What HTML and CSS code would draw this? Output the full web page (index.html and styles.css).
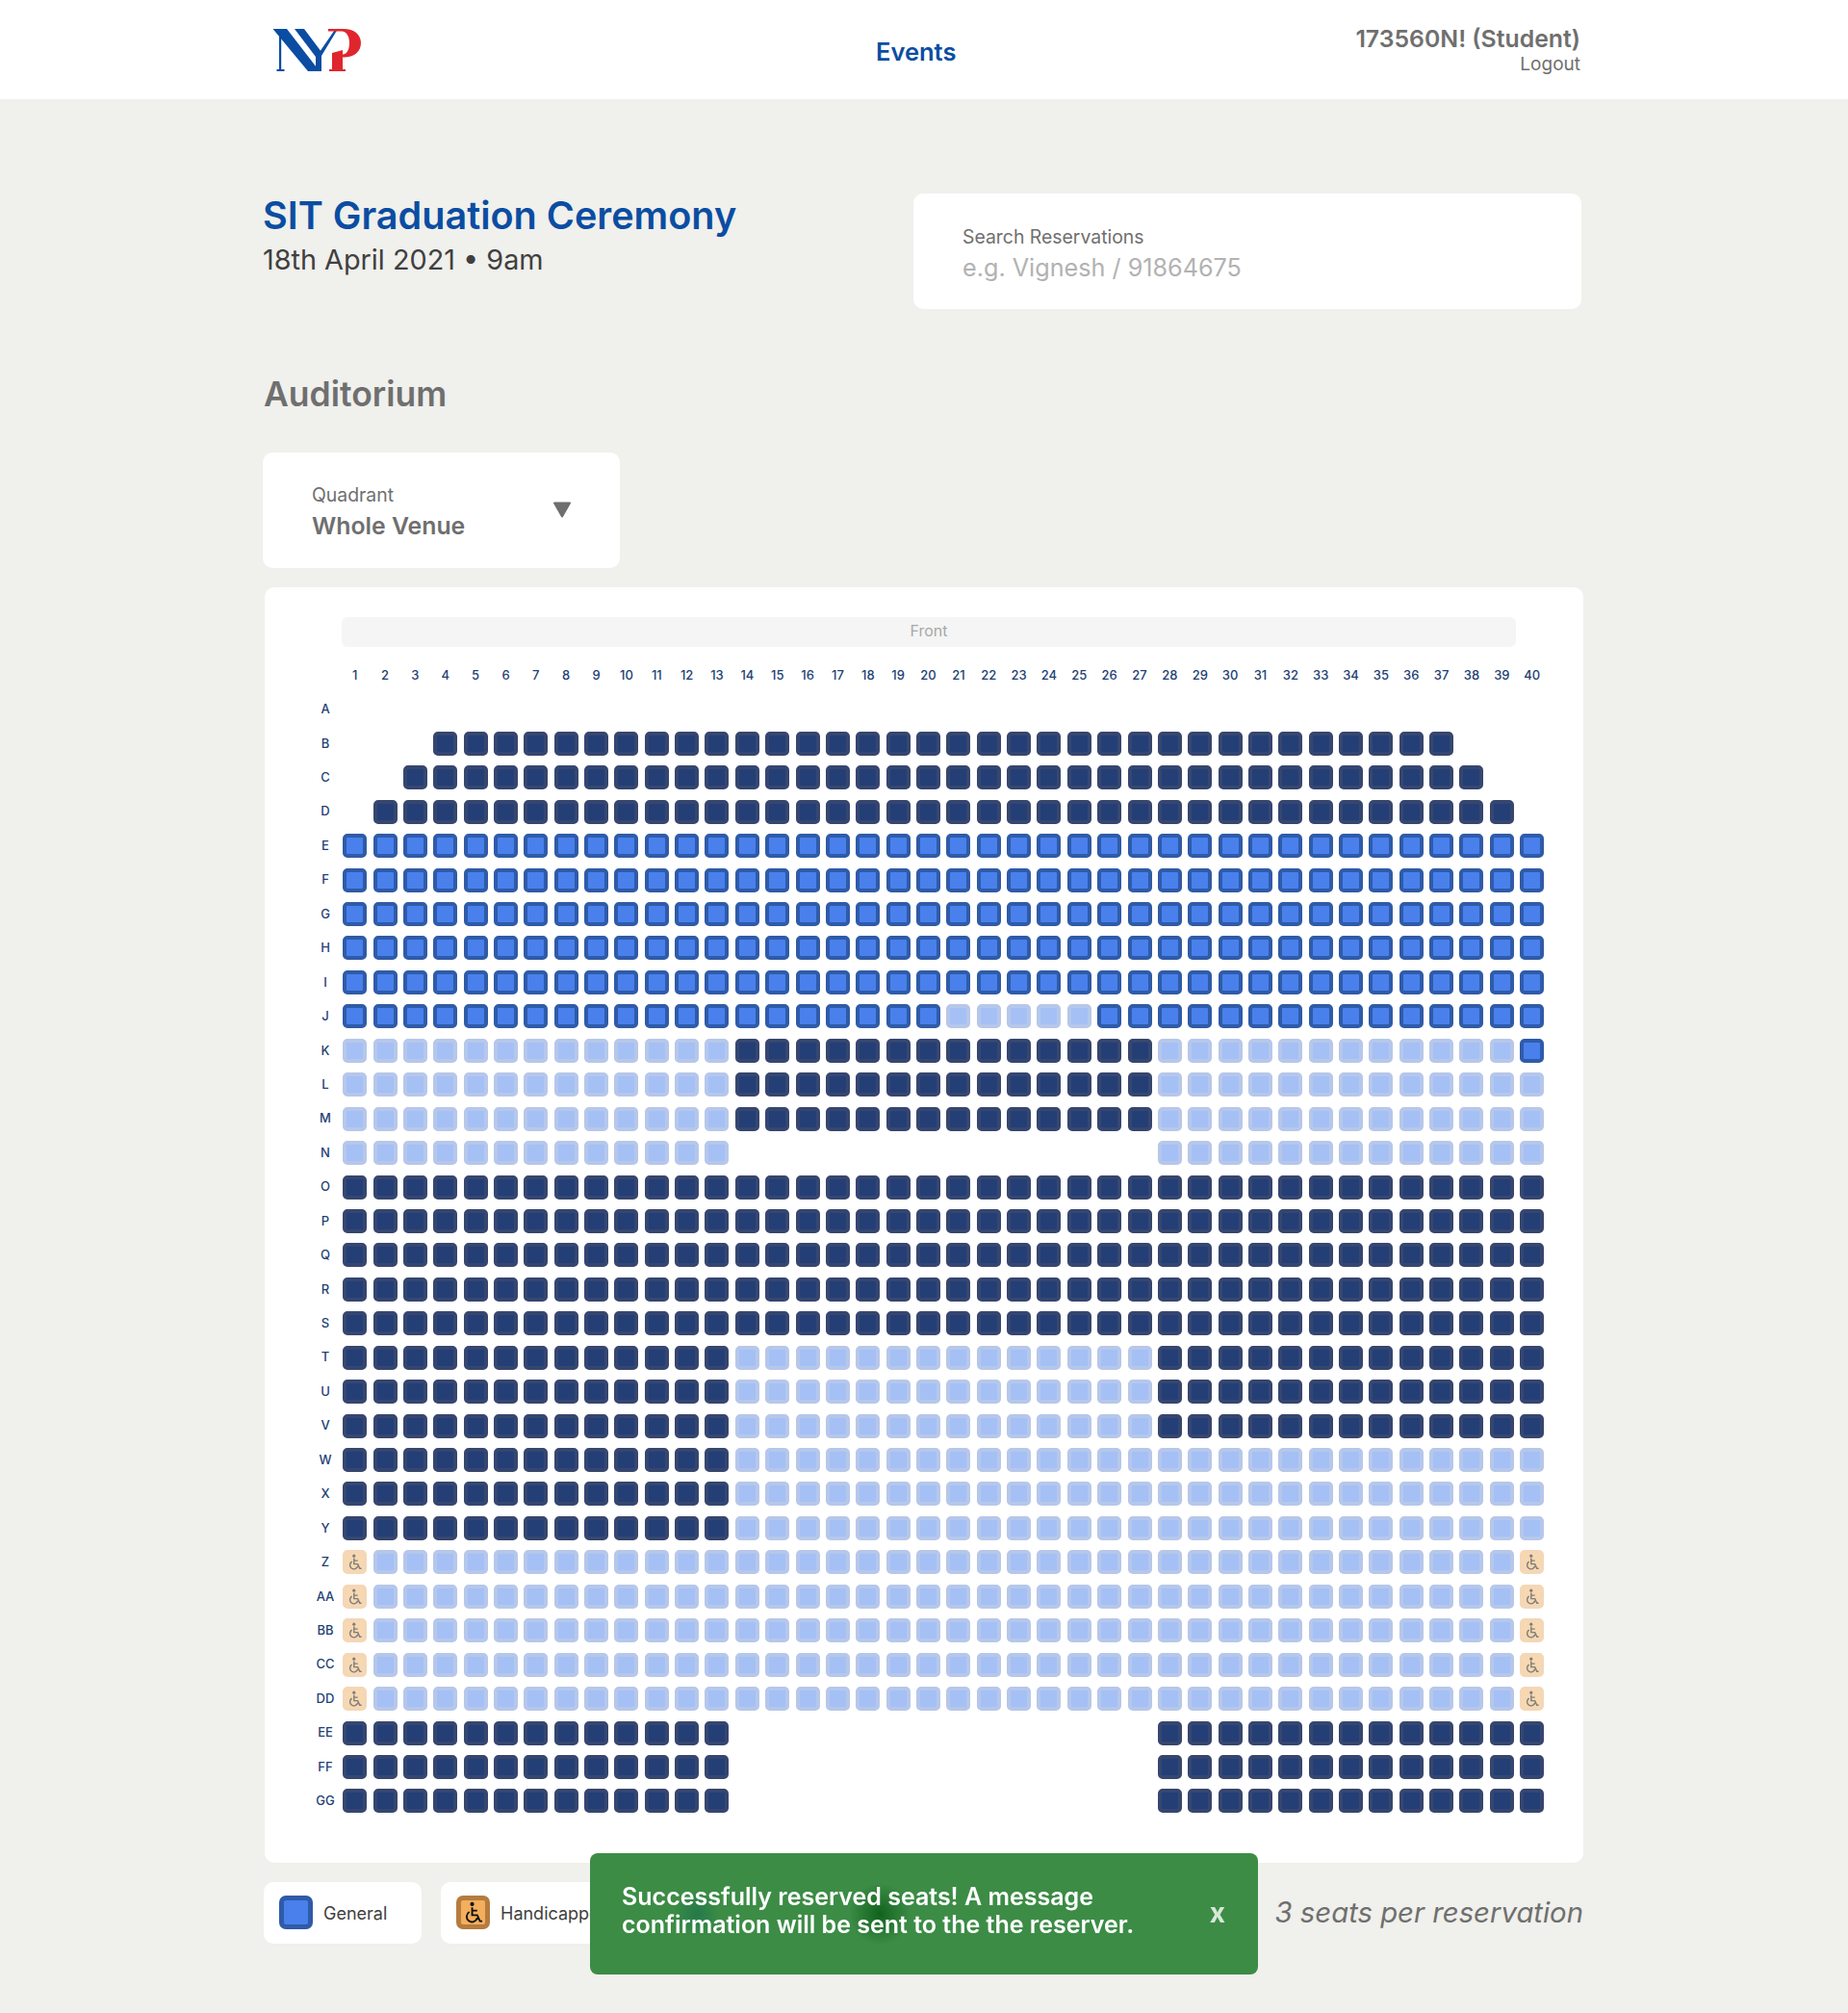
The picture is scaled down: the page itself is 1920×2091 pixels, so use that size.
FILE: index.html
```html
<!DOCTYPE html>
<html lang="en">
<head>
    <meta charset="UTF-8">
    <meta name="viewport" content="width=device-width, initial-scale=1.0">
    <title>Auditorium Seats</title>
    <link rel="stylesheet" href="styles.css">
</head>
<body>

    <header class="topbar">
        <div class="topbar-inner">
            <svg class="logo" viewBox="0 0 104 54" role="img" aria-label="NYP">
                <g fill="#0b4da2">
                    <rect x="12" y="5" width="2.2" height="42"/>
                    <rect x="9.5" y="47" width="8" height="2"/>
                    <polygon points="5.5,5 20,5 54,49 42,49"/>
                    <polygon points="28,5 38,5 56,29 56,49 50,49 50,34"/>
                    <polygon points="54,29 70.5,5 73,5 56,33"/>
                </g>
                <g fill="#e0262d">
                    <polygon points="67,30 78,27 78,47 67,47"/>
                    <rect x="64" y="47" width="17" height="2"/>
                    <path d="M63 5h16c11 0 18 6 18 14.500c0 9-7 15-18 15h-1v-3c5 0 7-6 7-12c0-7-3-12-8-12h-14z"/>
                </g>
            </svg>
            <a class="nav-link" href="#">Events</a>
            <div class="user">
                <div class="user-name">173560N! (Student)</div>
                <a class="user-logout" href="#">Logout</a>
            </div>
        </div>
    </header>

    <main class="page">
        <div class="event-row">
            <div class="event-info">
                <h1>SIT Graduation Ceremony</h1>
                <p>18th April 2021 • 9am</p>
            </div>
            <div class="card search-card">
                <label class="field-label" for="search">Search Reservations</label>
                <input id="search" class="search-input" type="text" placeholder="e.g. Vignesh / 91864675">
            </div>
        </div>

        <h2>Auditorium</h2>

        <div class="card quadrant-card">
            <div>
                <div class="field-label">Quadrant</div>
                <div class="quadrant-value">Whole Venue</div>
            </div>
            <svg class="caret" viewBox="0 0 20 17"><path d="M2 1.500h16l-8 14z" fill="#6f6f6f" stroke="#6f6f6f" stroke-width="2" stroke-linejoin="round"/></svg>
        </div>

        <section class="card seat-panel">
            <div class="front-bar">Front</div>
            <div class="seat-grid" id="seatGrid"></div>
        </section>

        <div class="footer-row">
            <div class="card legend-card">
                <span class="swatch swatch-general"></span>
                General
            </div>
            <div class="card legend-card legend-wide">
                <span class="swatch swatch-handicap">
                    <svg class="wheelchair" viewBox="0 0 24 24"><use href="#wheelchair-icon"/></svg>
                </span>
                Handicapped
            </div>
            <div class="seat-note">3 seats per reservation</div>
        </div>
    </main>

    <div class="toast">
        <div class="toast-text">Successfully reserved seats! A message<br>confirmation will be sent to the the reserver.</div>
        <button class="toast-close">x</button>
    </div>

    <svg class="icon-defs" aria-hidden="true">
        <symbol id="wheelchair-icon" viewBox="0 0 24 24">
            <circle cx="11" cy="3" r="2.200" fill="currentColor"/>
            <path d="M11 6.500v8.500h5.500l3 6.500h2.500M11 10h5.500M8 11.500a5.800 5.800 0 1 0 8.500 6.500" fill="none" stroke="currentColor" stroke-width="2"/>
        </symbol>
    </svg>

    <script src="script.js"></script>
</body>
</html>
```

FILE: styles.css
```css
* {
    box-sizing: border-box;
}

body {
    margin: 0;
    font-family: Inter, "Open Sans", sans-serif;
    background-color: #f0f0ec;
    color: #6f6f6f;
}

a {
    text-decoration: none;
}

.topbar {
    background: white;
    height: 103px;
}

.topbar-inner {
    display: grid;
    grid-template-columns: 637px auto 1fr;
    align-items: center;
    height: 100%;
    padding: 0 278px 0 273px;
}

.logo {
    display: block;
    width: 104px;
    height: 54px;
    margin-left: 5px;
}

.nav-link {
    margin-top: 4px;
    color: #0b4da2;
    font-size: 25.500px;
    font-weight: 600;
}

.user {
    padding-top: 2px;
    text-align: right;
}

.user-name {
    font-size: 24.800px;
    font-weight: 600;
    line-height: 30px;
    margin-top: -1px;
}

.user-logout {
    display: block;
    color: #6f6f6f;
    font-size: 19px;
    line-height: 24px;
}

.page {
    padding: 98px 275px 72px 273px;
}

.card {
    background: white;
    border-radius: 10px;
}

.event-row {
    display: flex;
    justify-content: space-between;
}

h1 {
    margin: 0;
    padding-top: 1px;
    color: #0b4da2;
    font-size: 39.600px;
    font-weight: 600;
    line-height: 45px;
}

.event-info p {
    margin: 0;
    color: #404040;
    font-size: 28.800px;
    line-height: 46px;
}

.search-card {
    width: 694px;
    height: 120px;
    margin-right: 2px;
    padding: 31px 50px 0 51px;
}

.field-label {
    display: block;
    color: #6f6f6f;
    font-size: 19.400px;
    line-height: 28px;
}

.search-input {
    width: 100%;
    padding: 0;
    border: none;
    outline: none;
    font-family: inherit;
    font-size: 25.200px;
    line-height: 36px;
}

.search-input::placeholder {
    color: #b2b2b2;
}

h2 {
    margin: 67px 0 38px 1px;
    color: #6f6f6f;
    font-size: 35.500px;
    font-weight: 600;
    line-height: 44px;
}

.quadrant-card {
    display: flex;
    align-items: center;
    justify-content: space-between;
    width: 371px;
    height: 120px;
    padding: 4px 50px 0 51px;
}

.quadrant-value {
    font-size: 24.800px;
    font-weight: 600;
    line-height: 36px;
}

.caret {
    width: 20px;
    height: 17px;
    margin-top: -6px;
}

.seat-panel {
    margin: 20px 0 0 2px;
    padding: 31px 0 47px 48px;
}

.front-bar {
    width: 1220px;
    height: 31px;
    margin: 0 0 11px 32px;
    background: #f5f5f5;
    border-radius: 6px;
    color: #a8a8a8;
    font-size: 16px;
    line-height: 29px;
    text-align: center;
}

.seat-grid {
    display: grid;
    grid-template-columns: 30px repeat(40, 31.36px);
    grid-auto-rows: 35.44px;
    align-items: center;
    justify-items: center;
    color: #243f74;
    font-size: 13px;
    font-weight: 500;
}

.seat {
    display: flex;
    align-items: center;
    justify-content: center;
    width: 25px;
    height: 25px;
    margin-top: 1.500px;
    border: 4px solid;
    border-radius: 5px;
}

.seat-taken {
    background: #243f76;
    border-color: #36466f;
}

.seat-general {
    background: #4a80ec;
    border-color: #2f5ba8;
}

.seat-held {
    background: #a5c0f5;
    border-color: #b6c7ea;
}

.seat-access {
    background: #f8d8b0;
    border-color: #f4d7b6;
    color: #7d7d7d;
}

.seat-access svg {
    flex: none;
    width: 17px;
    height: 17px;
}

.footer-row {
    display: flex;
    align-items: center;
    margin-top: 20px;
    padding-left: 1px;
}

.legend-card {
    display: flex;
    align-items: center;
    gap: 11px;
    width: 164px;
    height: 64px;
    margin-right: 20px;
    padding: 2px 0 0 16px;
    color: #404040;
    font-size: 18px;
}

.legend-wide {
    width: 240px;
}

.swatch {
    display: flex;
    align-items: center;
    justify-content: center;
    width: 35px;
    height: 35px;
    margin-top: -2px;
    border: 5px solid;
    border-radius: 7px;
}

.swatch-general {
    background: #4a80ec;
    border-color: #2f5ba8;
}

.swatch-handicap {
    background: #f4ae5c;
    border-color: #b47c3f;
    color: #111;
}

.wheelchair {
    flex: none;
    width: 23px;
    height: 23px;
}

.seat-note {
    margin-left: auto;
    font-size: 29.300px;
    font-style: italic;
}

.toast {
    position: fixed;
    left: calc(50% - 347px);
    bottom: 40px;
    display: flex;
    align-items: center;
    justify-content: space-between;
    width: 694px;
    height: 126px;
    padding: 0 34px 0 33px;
    border-radius: 8px;
    background: radial-gradient(circle at 301px 63px, #10621c 0, rgba(16, 98, 28, 0) 32px),
        radial-gradient(circle at 111px 63px, #23794a 0, rgba(35, 121, 74, 0) 24px),
        #3c8c46;
    color: white;
    font-size: 25px;
    font-weight: 600;
    line-height: 29px;
}

.toast-text {
    margin-top: -6px;
}

.toast-close {
    margin-top: -3px;
    padding: 0;
    border: none;
    background: none;
    color: #d6e8d8;
    font-family: inherit;
    font-size: 28px;
    font-weight: 700;
}

.icon-defs {
    display: none;
}
```

FILE: script.js
```js
const rowNames = "A B C D E F G H I J K L M N O P Q R S T U V W X Y Z AA BB CC DD EE FF GG".split(" ");

// [first, last, type] per row, later ranges win
const rowRanges = {
    B: [[4, 37, "taken"]],
    C: [[3, 38, "taken"]],
    D: [[2, 39, "taken"]],
    E: [[1, 40, "general"]],
    F: [[1, 40, "general"]],
    G: [[1, 40, "general"]],
    H: [[1, 40, "general"]],
    I: [[1, 40, "general"]],
    J: [[1, 40, "general"], [21, 25, "held"]],
    K: [[1, 13, "held"], [14, 27, "taken"], [28, 39, "held"], [40, 40, "general"]],
    L: [[1, 13, "held"], [14, 27, "taken"], [28, 40, "held"]],
    M: [[1, 13, "held"], [14, 27, "taken"], [28, 40, "held"]],
    N: [[1, 13, "held"], [28, 40, "held"]],
    O: [[1, 40, "taken"]],
    P: [[1, 40, "taken"]],
    Q: [[1, 40, "taken"]],
    R: [[1, 40, "taken"]],
    S: [[1, 40, "taken"]],
    T: [[1, 13, "taken"], [14, 27, "held"], [28, 40, "taken"]],
    U: [[1, 13, "taken"], [14, 27, "held"], [28, 40, "taken"]],
    V: [[1, 13, "taken"], [14, 27, "held"], [28, 40, "taken"]],
    W: [[1, 13, "taken"], [14, 40, "held"]],
    X: [[1, 13, "taken"], [14, 40, "held"]],
    Y: [[1, 13, "taken"], [14, 40, "held"]],
    EE: [[1, 13, "taken"], [28, 40, "taken"]],
    FF: [[1, 13, "taken"], [28, 40, "taken"]],
    GG: [[1, 13, "taken"], [28, 40, "taken"]]
};

["Z", "AA", "BB", "CC", "DD"].forEach(name => {
    rowRanges[name] = [[1, 40, "held"], [1, 1, "access"], [40, 40, "access"]];
});

function seatType(row, col) {
    let type = null;
    (rowRanges[row] || []).forEach(range => {
        if (col >= range[0] && col <= range[1]) type = range[2];
    });
    return type;
}

let html = "<span></span>";
for (let col = 1; col <= 40; col++) {
    html += `<span>${col}</span>`;
}

rowNames.forEach(row => {
    html += `<span>${row}</span>`;
    for (let col = 1; col <= 40; col++) {
        const type = seatType(row, col);
        if (type === "access") {
            html += `<span class="seat seat-access"><svg viewBox="0 0 24 24"><use href="#wheelchair-icon"/></svg></span>`;
        } else if (type) {
            html += `<span class="seat seat-${type}"></span>`;
        } else {
            html += "<span></span>";
        }
    }
});

document.getElementById("seatGrid").innerHTML = html;
```
